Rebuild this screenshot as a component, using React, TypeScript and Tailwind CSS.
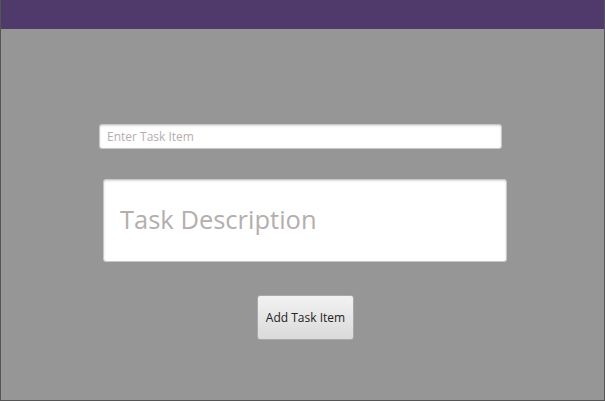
export default function App() {
  return (
    <div
      className="flex h-[401px] w-[605px] flex-col border border-t-0 border-[#555555] bg-[#969696]"
      style={{ fontFamily: '"Open Sans", "Noto Sans", sans-serif' }}
    >
      <div className="h-[29px] w-full shrink-0 bg-[#4f3a6b]" />

      <div className="flex flex-col pt-[95px]">
        <input
          type="text"
          placeholder="Enter Task Item"
          className="ml-[98px] h-[25px] w-[403px] rounded-[3px] border border-[#c8c8c8] bg-white px-[7px] text-[12px] text-[#333] shadow-[inset_0_1px_2px_rgba(0,0,0,0.15)] outline-none placeholder:text-[#b4aeae]"
        />

        <textarea
          placeholder="Task Description"
          className="ml-[102px] mt-[30px] h-[83px] w-[404px] resize-none rounded-[3px] border border-[#c8c8c8] bg-white px-[16px] pt-[23px] text-[25.5px] leading-[32px] text-[#333] shadow-[inset_0_1px_2px_rgba(0,0,0,0.15)] outline-none placeholder:text-[#b4aeae]"
        />

        <button className="ml-[256px] mt-[33px] h-[45px] w-[97px] rounded-[3px] border border-[#a9a9a9] bg-gradient-to-b from-[#f2f2f2] to-[#dadada] text-[12px] text-[#222]">
          Add Task Item
        </button>
      </div>
    </div>
  );
}
